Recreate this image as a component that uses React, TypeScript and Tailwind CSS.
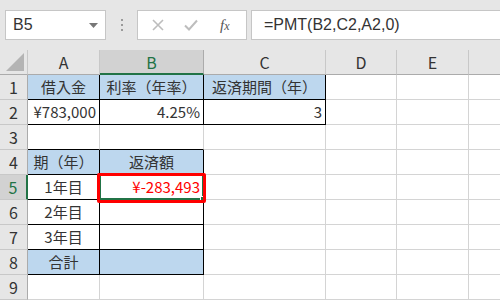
import React from "react";
import clsx from "clsx";

type CellDef = {
  text?: string;
  align?: "center" | "right";
  fill?: boolean;
  rb?: boolean;
  bb?: boolean;
  red?: boolean;
  sel?: boolean;
};

const colW = ["w-[72px]", "w-[104px]", "w-[122px]", "w-[71px]", "w-[72px]", "w-[60px]"];
const colNames = ["A", "B", "C", "D", "E", ""];

// 表の中身 (A〜C列のみ)
const rows: CellDef[][] = [
  [
    { text: "借入金", fill: true, rb: true, bb: true },
    { text: "利率（年率）", fill: true, rb: true, bb: true },
    { text: "返済期間（年）", fill: true, rb: true, bb: true },
  ],
  [
    { text: "¥783,000", align: "right", rb: true, bb: true },
    { text: "4.25%", align: "right", rb: true, bb: true },
    { text: "3", align: "right", rb: true, bb: true },
  ],
  [{ bb: true }, { bb: true }, {}],
  [
    { text: "期（年）", fill: true, rb: true, bb: true },
    { text: "返済額", fill: true, rb: true, bb: true },
    {},
  ],
  [
    { text: "1年目", rb: true, bb: true },
    { text: "¥-283,493", align: "right", rb: true, bb: true, red: true, sel: true },
    {},
  ],
  [{ text: "2年目", rb: true, bb: true }, { rb: true, bb: true }, {}],
  [{ text: "3年目", rb: true, bb: true }, { rb: true, bb: true }, {}],
  [{ text: "合計", fill: true, rb: true, bb: true }, { fill: true, rb: true, bb: true }, {}],
  [{}, {}, {}],
];

const font = { fontFamily: '"Noto Sans CJK JP", "Noto Sans", sans-serif' };

function Cell({ w, c }: { w: string; c: CellDef }) {
  return (
    <div
      className={clsx(
        "relative h-full shrink-0 flex items-center px-[3px] border-r border-b text-[15px] whitespace-nowrap",
        w,
        c.rb ? "border-r-black" : "border-r-[#d4d4d4]",
        c.bb ? "border-b-black" : "border-b-[#d4d4d4]",
        c.fill ? "bg-[#bdd7ee]" : "bg-white",
        c.align === "right" ? "justify-end" : "justify-center",
        c.red ? "text-[#ff0000]" : "text-[#333]"
      )}
    >
      {c.text}
      {c.sel && (
        <>
          <div className="absolute z-10 top-[-1px] left-[-1px] right-[-1px] bottom-[-1px] border-2 border-[#217346]" />
          <div className="absolute z-10 right-[-3px] bottom-[-3px] w-[6px] h-[6px] bg-[#217346] border border-white" />
          <div className="absolute z-20 top-[-2px] left-[-3px] right-[-3px] bottom-[-4px] border-[3px] border-[#ff0000] rounded-[2px]" />
        </>
      )}
    </div>
  );
}

export default function App() {
  return (
    <div className="w-[500px] h-[300px] overflow-hidden bg-white" style={font}>
      {/* 数式バー */}
      <div className="h-[50px] bg-[#e6e6e6] flex items-start pt-[10px]">
        <div className="ml-[5px] w-[101px] h-[30px] bg-white border border-[#c6c6c6] flex items-center justify-between pl-[7px] pr-[7px]">
          <span className="text-[16px] text-[#333]" style={{ fontFamily: '"Liberation Sans", Arial, sans-serif' }}>
            B5
          </span>
          <svg width="9" height="5" viewBox="0 0 9 5">
            <path d="M0 0 H9 L4.5 5 Z" fill="#777" />
          </svg>
        </div>
        <div className="w-[31px] h-[30px] flex flex-col items-center justify-center gap-[3px]">
          <div className="w-[2px] h-[2px] bg-[#9a9a9a]" />
          <div className="w-[2px] h-[2px] bg-[#9a9a9a]" />
          <div className="w-[2px] h-[2px] bg-[#9a9a9a]" />
        </div>
        <div className="w-[110px] h-[30px] bg-white border border-[#c6c6c6] flex items-center">
          <svg className="ml-[14px]" width="12" height="12" viewBox="0 0 12 12">
            <path d="M1 1 L11 11 M11 1 L1 11" stroke="#bdbdbd" strokeWidth="1.6" />
          </svg>
          <svg className="ml-[20px]" width="14" height="12" viewBox="0 0 14 12">
            <path d="M1 6.5 L5 10.5 L13 1.5" stroke="#bdbdbd" strokeWidth="2" fill="none" />
          </svg>
          <span
            className="ml-[22px] text-[15px] italic text-[#555]"
            style={{ fontFamily: '"Liberation Serif", "Times New Roman", serif' }}
          >
            f<span className="text-[12px]">x</span>
          </span>
        </div>
        <div className="ml-[4px] flex-1 h-[30px] bg-white border border-[#c6c6c6] border-r-0 flex items-center pl-[12px]">
          <span className="text-[16px] text-[#333]" style={{ fontFamily: '"Liberation Sans", Arial, sans-serif' }}>
            =PMT(B2,C2,A2,0)
          </span>
        </div>
      </div>

      {/* 列見出し */}
      <div className="flex h-[25px] bg-[#e6e6e6]">
        <div className="w-[28px] h-full shrink-0 border-r border-b border-r-[#c8c8c8] border-b-[#ababab] flex items-end justify-end p-[3px]">
          <svg width="18" height="18" viewBox="0 0 18 18">
            <path d="M18 0 V18 H0 Z" fill="#b4b4b4" />
          </svg>
        </div>
        {colNames.map((n, i) => (
          <div
            key={i}
            className={clsx(
              "h-full shrink-0 flex items-center justify-center text-[16px] border-r",
              colW[i],
              n === "B"
                ? "bg-[#d2d2d2] text-[#217346] border-b-2 border-b-[#217346] border-r-[#ababab]"
                : "text-[#333] border-b border-b-[#ababab] border-r-[#c8c8c8]"
            )}
          >
            {n}
          </div>
        ))}
      </div>

      {/* 行 */}
      {rows.map((r, ri) => (
        <div key={ri} className="flex h-[25px]">
          <div
            className={clsx(
              "w-[28px] h-full shrink-0 flex items-center justify-center text-[16px] border-b border-b-[#c8c8c8]",
              ri === 4
                ? "bg-[#d2d2d2] text-[#217346] border-r-2 border-r-[#217346]"
                : "bg-[#e6e6e6] text-[#333] border-r border-r-[#ababab]"
            )}
          >
            {ri + 1}
          </div>
          {colW.map((w, ci) => (
            <Cell key={ci} w={w} c={r[ci] ?? {}} />
          ))}
        </div>
      ))}
    </div>
  );
}
